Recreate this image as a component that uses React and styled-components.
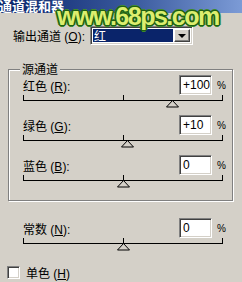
import React from 'react';
import styled, { createGlobalStyle } from 'styled-components';

const GlobalStyle = createGlobalStyle`
  html, body {
    margin: 0;
    padding: 0;
    background: #d4d0c8;
  }
  body {
    width: 242px;
    height: 282px;
    overflow: hidden;
    font-family: "Liberation Sans", "Noto Sans CJK SC", sans-serif;
    font-size: 12px;
    color: #000;
  }
`;

const channels = [
    { label: '红色', key: 'R', value: '+100', num: 100 },
    { label: '绿色', key: 'G', value: '+10', num: 10 },
    { label: '蓝色', key: 'B', value: '0', num: 0 },
];

const Slider = ({ value }) => {
    const pos = ((value + 200) / 400) * 199;
    return (
        <SliderBox>
            <Ticks>
                <Tick />
                <Tick />
                <Tick />
            </Ticks>
            <Track />
            <ThumbArea>
                <Thumb style={{ left: `${pos - 6}px` }} width="13" height="8" viewBox="0 0 13 8">
                    <polygon points="6.5,0.5 12.5,7 0.5,7" fill="#d4d0c8" stroke="#000" strokeWidth="1" />
                </Thumb>
            </ThumbArea>
        </SliderBox>
    );
};

const ValueRow = ({ label, hotkey, value, first }) => (
    <Header $first={first}>
        <Label>
            {label} (<u>{hotkey}</u>):
        </Label>
        <NumberBox>{value}</NumberBox>
        <Percent>%</Percent>
    </Header>
);

const App = () => {
    return (
        <>
            <GlobalStyle />
            <Dialog>
                <TitleBar>
                    <TitleText>通道混和器</TitleText>
                </TitleBar>

                <OutputRow>
                    <OutputLabel>
                        输出通道 (<u>O</u>):
                    </OutputLabel>
                    <Select>
                        <SelectValue>红</SelectValue>
                        <DropButton>
                            <Arrow />
                        </DropButton>
                    </Select>
                </OutputRow>

                <Group>
                    <Legend>源通道</Legend>
                    {channels.map((c, i) => (
                        <div key={c.key}>
                            <ValueRow label={c.label} hotkey={c.key} value={c.value} first={i === 0} />
                            <Slider value={c.num} />
                        </div>
                    ))}
                </Group>

                <ConstantSection>
                    <ValueRow label="常数" hotkey="N" value="0" first />
                    <Slider value={0} />
                </ConstantSection>

                <CheckRow>
                    <CheckBox />
                    <CheckLabel>
                        单色 (<u>H</u>)
                    </CheckLabel>
                </CheckRow>

                <Watermark>www.68ps.com</Watermark>
            </Dialog>
        </>
    );
};

const Dialog = styled.div`
    position: relative;
    width: 242px;
    height: 282px;
    background: #d4d0c8;
    overflow: hidden;
`;

const TitleBar = styled.div`
    height: 13px;
    background: linear-gradient(to right, #0a246a 0%, #3a5a9e 55%, #7c9bd6 100%);
    overflow: hidden;
    display: flex;
    align-items: flex-end;
`;

const TitleText = styled.span`
    color: #fff;
    font-family: "Noto Sans CJK SC", sans-serif;
    font-weight: bold;
    font-size: 13px;
    line-height: 13px;
    margin-left: -1px;
    margin-bottom: 1px;
`;

const OutputRow = styled.div`
    display: flex;
    align-items: center;
    margin-top: 13px;
    padding-left: 13px;
    height: 19px;
`;

const OutputLabel = styled.span`
    width: 77px;
    white-space: nowrap;
`;

const sunken = `
    box-sizing: border-box;
    background: #fff;
    border: 1px solid;
    border-color: #808080 #fff #fff #808080;
    box-shadow: inset 1px 1px #404040, inset -1px -1px #d4d0c8;
`;

const Select = styled.div`
    ${sunken}
    width: 103px;
    height: 19px;
    display: flex;
    padding: 2px;
`;

const SelectValue = styled.div`
    flex: 1;
    background: #0a246a;
    color: #fff;
    font-family: "Noto Sans CJK SC", sans-serif;
    font-size: 12px;
    line-height: 13px;
    padding-left: 1px;
    margin-right: 1px;
`;

const DropButton = styled.div`
    box-sizing: border-box;
    width: 16px;
    background: #d4d0c8;
    border: 1px solid;
    border-color: #fff #404040 #404040 #fff;
    box-shadow: inset -1px -1px #808080;
    display: flex;
    align-items: center;
    justify-content: center;
`;

const Arrow = styled.div`
    width: 0;
    height: 0;
    border-left: 4px solid transparent;
    border-right: 4px solid transparent;
    border-top: 4px solid #000;
    margin-top: 1px;
`;

const Group = styled.fieldset`
    margin: 18px 9px 0 8px;
    padding: 0 9px 12px 14px;
    border: 1px solid #808080;
    box-shadow: 1px 1px 0 #fff, inset 1px 1px 0 #fff;
    min-width: 0;
`;

const Legend = styled.legend`
    font-family: "Noto Sans CJK SC", sans-serif;
    font-size: 12px;
    line-height: 12px;
    padding: 0 2px;
    margin-left: -3px;
    background: #d4d0c8;
`;

const Header = styled.div`
    display: flex;
    align-items: center;
    height: 20px;
    margin-top: ${(p) => (p.$first ? '0' : '7px')};
`;

const Label = styled.span`
    flex: 1;
    white-space: nowrap;
`;

const NumberBox = styled.div`
    ${sunken}
    width: 33px;
    height: 20px;
    padding: 0 0 0 3px;
    font-size: 12px;
    line-height: 18px;
`;

const Percent = styled.span`
    width: 6px;
    margin-left: 5px;
    font-size: 10px;
`;

const SliderBox = styled.div`
    width: 200px;
    height: 13px;
`;

const Ticks = styled.div`
    display: flex;
    justify-content: space-between;
    height: 5px;
`;

const Tick = styled.div`
    width: 1px;
    background: #000;
`;

const Track = styled.div`
    height: 1px;
    background: #000;
`;

const ThumbArea = styled.div`
    position: relative;
    height: 7px;
`;

const Thumb = styled.svg`
    position: absolute;
    top: -1px;
    display: block;
`;

const ConstantSection = styled.div`
    margin-top: 17px;
    padding: 0 19px 0 23px;
`;

const CheckRow = styled.div`
    display: flex;
    align-items: center;
    margin-top: 13px;
    padding-left: 7px;
`;

const CheckBox = styled.div`
    ${sunken}
    width: 13px;
    height: 13px;
`;

const CheckLabel = styled.span`
    margin-left: 6px;
`;

const Watermark = styled.div`
    position: absolute;
    top: 4px;
    left: 57px;
    font-family: "Liberation Sans", sans-serif;
    font-weight: bold;
    font-size: 25px;
    line-height: 25px;
    letter-spacing: -1.5px;
    color: #dcee6e;
    text-shadow:
        1px 0 #1f5e14, -1px 0 #1f5e14, 0 1px #1f5e14, 0 -1px #1f5e14,
        1px 1px #1f5e14, -1px -1px #1f5e14, 1px -1px #1f5e14, -1px 1px #1f5e14,
        2px 0 #3d8a2a, -2px 0 #3d8a2a, 0 2px #3d8a2a, 0 -2px #3d8a2a;
    white-space: nowrap;
    pointer-events: none;
`;

export default App;
